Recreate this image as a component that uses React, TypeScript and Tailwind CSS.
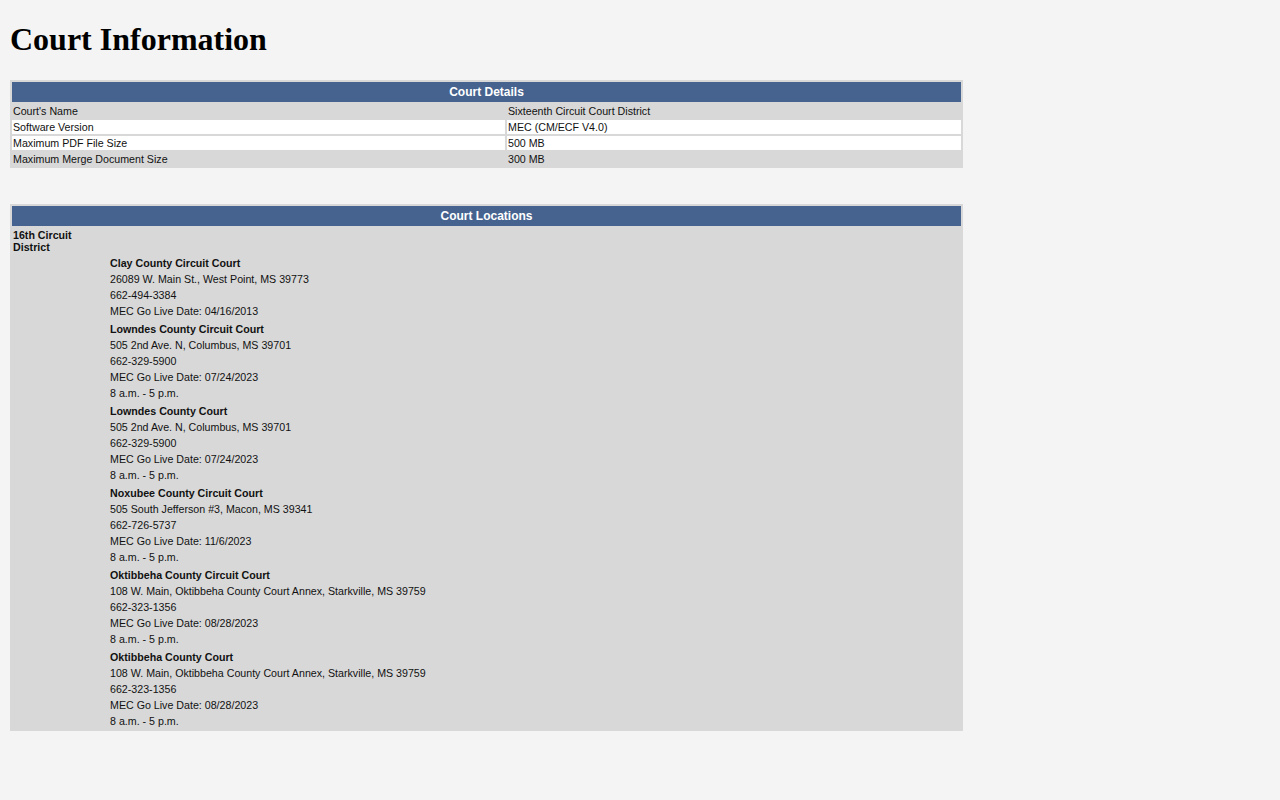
import React from "react";

type Court = { name: string; lines: string[] };

const courts: Court[] = [
  {
    name: "Clay County Circuit Court",
    lines: ["26089 W. Main St., West Point, MS 39773", "662-494-3384", "MEC Go Live Date: 04/16/2013"],
  },
  {
    name: "Lowndes County Circuit Court",
    lines: ["505 2nd Ave. N, Columbus, MS 39701", "662-329-5900", "MEC Go Live Date: 07/24/2023", "8 a.m. - 5 p.m."],
  },
  {
    name: "Lowndes County Court",
    lines: ["505 2nd Ave. N, Columbus, MS 39701", "662-329-5900", "MEC Go Live Date: 07/24/2023", "8 a.m. - 5 p.m."],
  },
  {
    name: "Noxubee County Circuit Court",
    lines: ["505 South Jefferson #3, Macon, MS 39341", "662-726-5737", "MEC Go Live Date: 11/6/2023", "8 a.m. - 5 p.m."],
  },
  {
    name: "Oktibbeha County Circuit Court",
    lines: [
      "108 W. Main, Oktibbeha County Court Annex, Starkville, MS 39759",
      "662-323-1356",
      "MEC Go Live Date: 08/28/2023",
      "8 a.m. - 5 p.m.",
    ],
  },
  {
    name: "Oktibbeha County Court",
    lines: [
      "108 W. Main, Oktibbeha County Court Annex, Starkville, MS 39759",
      "662-323-1356",
      "MEC Go Live Date: 08/28/2023",
      "8 a.m. - 5 p.m.",
    ],
  },
];

const details: { label: string; value: string; white: boolean }[] = [
  { label: "Court's Name", value: "Sixteenth Circuit Court District", white: false },
  { label: "Software Version", value: "MEC (CM/ECF V4.0)", white: true },
  { label: "Maximum PDF File Size", value: "500 MB", white: true },
  { label: "Maximum Merge Document Size", value: "300 MB", white: false },
];

export default function App() {
  return (
    <div
      className="min-h-[800px] w-full bg-[#f4f4f4] pl-[10px] pt-[21px] text-[#111]"
      style={{ fontFamily: '"Liberation Sans", Arial, sans-serif' }}
    >
      <h1
        className="m-0 mb-[22px] text-[32px] font-bold leading-[37px] text-black"
        style={{ fontFamily: '"Liberation Serif", "Times New Roman", serif' }}
      >
        Court Information
      </h1>

      <div className="grid w-[953px] grid-cols-[493px_454px] gap-[2px] bg-[#d8d8d8] p-[2px]">
        <div className="col-span-2 flex h-[20px] items-center justify-center bg-[#46638f] text-[12px] font-bold leading-[14px] text-white">
          Court Details
        </div>
        {details.map((d) => (
          <React.Fragment key={d.label}>
            <div
              className={`h-[14px] px-[1px] text-[10.67px] leading-[14px] ${d.white ? "bg-white" : ""}`}
            >
              {d.label}
            </div>
            <div
              className={`h-[14px] px-[1px] text-[10.67px] leading-[14px] ${d.white ? "bg-white" : ""}`}
            >
              {d.value}
            </div>
          </React.Fragment>
        ))}
      </div>

      <div className="mt-[36px] grid w-[953px] grid-cols-[95px_1fr] gap-[2px] bg-[#d8d8d8] p-[2px]">
        <div className="col-span-2 flex h-[20px] items-center justify-center bg-[#46638f] text-[12px] font-bold leading-[14px] text-white">
          Court Locations
        </div>
        <div className="col-span-2 px-[1px] pt-[1px] text-[10.67px] font-bold leading-[12px]">
          <div className="w-[93px]">16th Circuit District</div>
        </div>
        {courts.map((c) => (
          <React.Fragment key={c.name}>
            <div />
            <div className="flex flex-col px-[1px] text-[10.67px] leading-[16px]">
              <div className="font-bold">{c.name}</div>
              {c.lines.map((l, i) => (
                <div key={i}>{l}</div>
              ))}
            </div>
          </React.Fragment>
        ))}
      </div>
    </div>
  );
}
